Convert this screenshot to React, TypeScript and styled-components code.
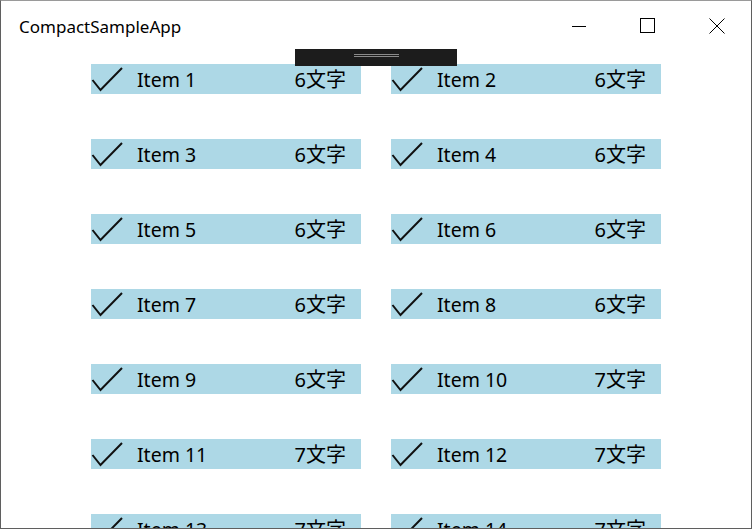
import React from "react";
import styled, { createGlobalStyle } from "styled-components";

const Global = createGlobalStyle`
  html, body { margin: 0; padding: 0; background: #ffffff; }
  body { font-family: "Noto Sans", "Noto Sans CJK JP", sans-serif; }
`;

const Window = styled.div`
  position: relative;
  width: 752px;
  height: 529px;
  box-sizing: border-box;
  border: 1px solid #5f5f5f;
  border-top-color: #9a9a9a;
  background: #ffffff;
  display: flex;
  flex-direction: column;
  overflow: hidden;
`;

const TitleBar = styled.div`
  height: 47px;
  flex: none;
  display: flex;
  align-items: flex-start;
`;

const Title = styled.div`
  padding: 14px 0 0 18px;
  font-family: "Noto Sans", sans-serif;
  font-size: 17px;
  color: #000;
  flex: 1;
`;

const Caption = styled.div`
  display: flex;
`;

const CaptionButton = styled.div`
  width: 69px;
  height: 47px;
  display: flex;
  align-items: center;
  justify-content: center;
  padding-top: 3px;
  box-sizing: border-box;
`;

const Content = styled.div`
  flex: 1;
  display: grid;
  grid-template-columns: 270px 270px;
  grid-auto-rows: 30px;
  column-gap: 30px;
  row-gap: 45px;
  justify-content: center;
  padding-top: 16px;
`;

const Item = styled.div`
  background: #add8e6;
  display: flex;
  align-items: center;
  height: 30px;
  padding-right: 15px;
  box-sizing: border-box;
`;

const Check = styled.svg`
  flex: none;
  width: 32px;
  height: 30px;
  margin-right: 14px;
`;

const Label = styled.span`
  flex: 1;
  font-size: 19.5px;
  color: #000;
  font-family: "Noto Sans", sans-serif;
  line-height: 30px;
  padding-top: 2px;
`;

const Count = styled.span`
  font-size: 20px;
  color: #000;
  font-family: "Noto Sans", "Noto Sans CJK JP", sans-serif;
  line-height: 30px;
  padding-top: 2px;
`;

const Handle = styled.div`
  position: absolute;
  top: 48px;
  left: 50%;
  transform: translateX(-50%);
  width: 162px;
  height: 17px;
  background: #1c1c1c;
  display: flex;
  flex-direction: column;
  align-items: center;
  padding-top: 5px;
  box-sizing: border-box;
  gap: 1px;
`;

const Grip = styled.div`
  width: 45px;
  height: 1px;
  background: #8a8a8a;
`;

const items = Array.from({ length: 14 }, (_, i) => ({
  n: i + 1,
  c: i + 1 >= 10 ? "7文字" : "6文字",
}));

export default function App() {
  return (
    <>
      <Global />
      <Window>
        <TitleBar>
          <Title>CompactSampleApp</Title>
          <Caption>
            <CaptionButton>
              <svg width="16" height="16" viewBox="0 0 16 16">
                <line x1="1" y1="8.5" x2="15" y2="8.5" stroke="#000" strokeWidth="1" />
              </svg>
            </CaptionButton>
            <CaptionButton>
              <svg width="16" height="16" viewBox="0 0 16 16">
                <rect x="0.5" y="0.5" width="14" height="14" fill="none" stroke="#000" strokeWidth="1" />
              </svg>
            </CaptionButton>
            <CaptionButton>
              <svg width="16" height="16" viewBox="0 0 16 16">
                <path d="M0.5 0.5 L15.5 15.5 M15.5 0.5 L0.5 15.5" stroke="#000" strokeWidth="1" fill="none" />
              </svg>
            </CaptionButton>
          </Caption>
        </TitleBar>
        <Content>
          {items.map((it) => (
            <Item key={it.n}>
              <Check viewBox="0 0 32 30">
                <path d="M1.5 16 L9.5 26 L31 4" stroke="#111" strokeWidth="2" fill="none" strokeLinejoin="miter" />
              </Check>
              <Label>Item {it.n}</Label>
              <Count>{it.c}</Count>
            </Item>
          ))}
        </Content>
        <Handle>
          <Grip />
          <Grip />
        </Handle>
      </Window>
    </>
  );
}
